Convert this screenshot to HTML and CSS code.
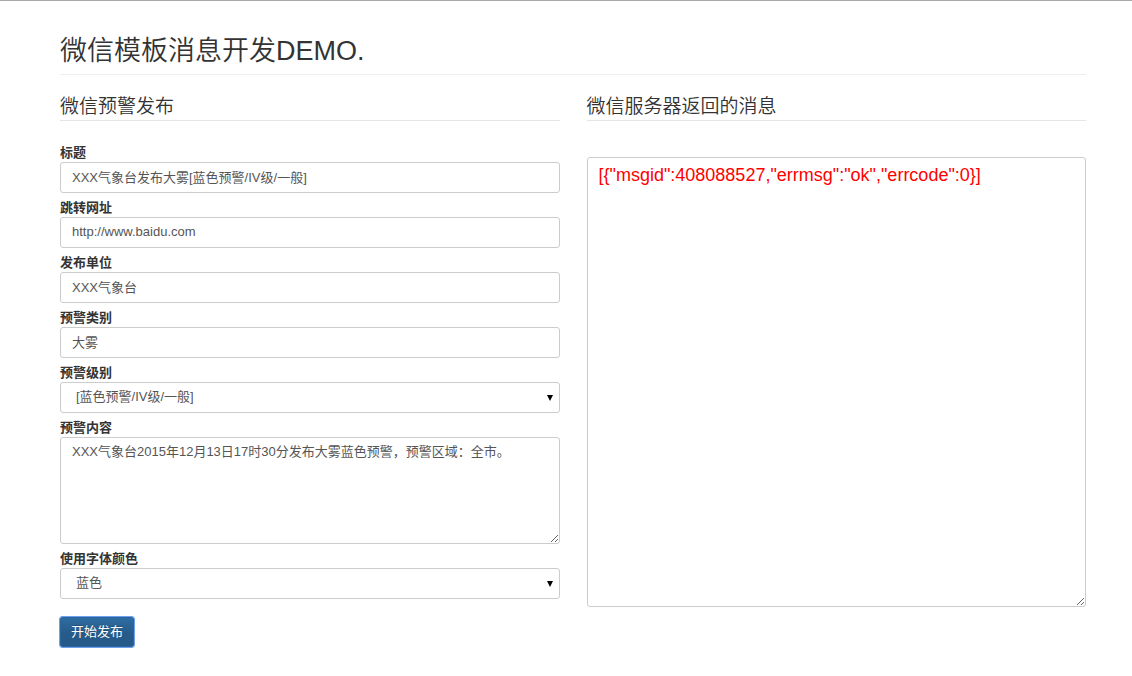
FILE: index.html
```
<!DOCTYPE html>
<html lang="zh-CN">
<head>
<meta charset="utf-8">
<title>微信模板消息开发DEMO.</title>
<link rel="stylesheet" href="styles.css">
</head>
<body>
<main class="container">
  <h1 class="page-title">微信模板消息开发DEMO.</h1>
  <div class="columns">
    <section>
      <h2 class="section-title">微信预警发布</h2>
      <form class="form">
        <label class="label" for="title">标题</label>
        <input class="control" id="title" type="text" value="XXX气象台发布大雾[蓝色预警/IV级/一般]">
        <label class="label" for="url">跳转网址</label>
        <input class="control" id="url" type="text" value="http://www.baidu.com">
        <label class="label" for="unit">发布单位</label>
        <input class="control" id="unit" type="text" value="XXX气象台">
        <label class="label" for="kind">预警类别</label>
        <input class="control" id="kind" type="text" value="大雾">
        <label class="label" for="level">预警级别</label>
        <select class="control select" id="level"><option>[蓝色预警/IV级/一般]</option></select>
        <label class="label" for="content">预警内容</label>
        <textarea class="control content" id="content">XXX气象台2015年12月13日17时30分发布大雾蓝色预警，预警区域：全市。</textarea>
        <label class="label" for="color">使用字体颜色</label>
        <select class="control select" id="color"><option>蓝色</option></select>
        <button class="submit" type="button">开始发布</button>
      </form>
    </section>
    <section>
      <h2 class="section-title">微信服务器返回的消息</h2>
      <textarea class="control result" aria-label="微信服务器返回的消息">[{"msgid":408088527,"errmsg":"ok","errcode":0}]</textarea>
    </section>
  </div>
</main>
</body>
</html>
```
FILE: styles.css
```
* {
  box-sizing: border-box;
}

body {
  margin: 0;
  border-top: 1px solid #a9a9a9;
  background: #fff;
  color: #333;
  font: 13px/19px "Liberation Sans", Arial, "Noto Sans CJK SC", sans-serif;
}

.container {
  padding: 33px 46px 28px 60px;
}

.page-title {
  margin: 0 0 20px;
  padding-bottom: 6px;
  border-bottom: 1px solid #eee;
  font-size: 27px;
  font-weight: 350;
  line-height: 34px;
}

.columns {
  display: grid;
  grid-template-columns: 1fr 1fr;
  column-gap: 27px;
}

.section-title {
  margin: 0;
  padding-bottom: 1px;
  border-bottom: 1px solid #e5e5e5;
  font-size: 19px;
  font-weight: 350;
  line-height: 24px;
}

.form {
  display: flex;
  flex-direction: column;
  padding-top: 17px;
}

.label {
  margin-top: 5px;
  font-weight: 700;
}

.control {
  display: block;
  width: 100%;
  height: 31px;
  margin: 0;
  padding: 4px 11px 6px;
  border: 1px solid #ccc;
  border-radius: 3px;
  background-color: #fff;
  color: #555;
  font: inherit;
}

.select {
  appearance: none;
  padding-left: 15px;
  background-image: url("data:image/svg+xml,%3Csvg xmlns='http://www.w3.org/2000/svg' width='6' height='6'%3E%3Cpath d='M0 0H6L3 6Z'/%3E%3C/svg%3E");
  background-repeat: no-repeat;
  background-position: right 6px center;
}

.content {
  height: 107px;
}

.submit {
  align-self: flex-start;
  margin-top: 18px;
  padding: 4px 10px 5px;
  border: 1px solid #2b669a;
  border-radius: 2px;
  outline: 1px solid #6f9ff0;
  background: linear-gradient(#2d6ca2, #265a88 60%);
  color: #fff;
  font: inherit;
  text-shadow: 0 -1px 0 rgba(0, 0, 0, 0.2);
}

.result {
  height: 450px;
  margin-top: 36px;
  padding-top: 5px;
  color: #f00;
  font-size: 18px;
  line-height: 24px;
}
```
